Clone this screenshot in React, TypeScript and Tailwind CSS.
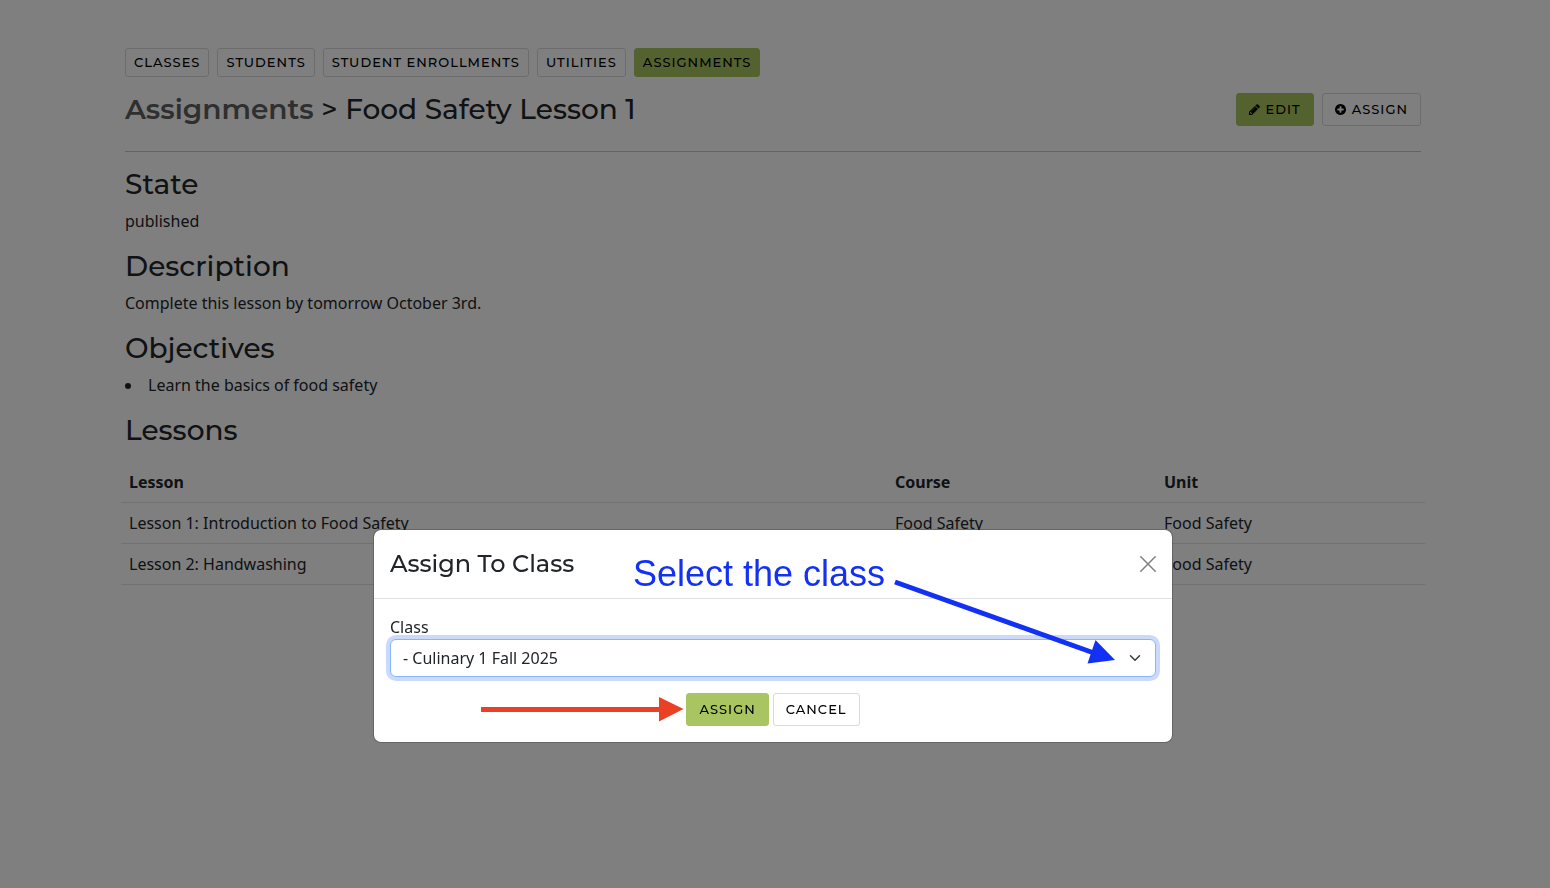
import React, { useState } from "react";

type lesson = {
  id: number;
  name: string;
  course: string;
  unit: string;
};

const tabs = ["Classes", "Students", "Student Enrollments", "Utilities", "Assignments"];

const lessons: lesson[] = [
  { id: 1, name: "Lesson 1: Introduction to Food Safety", course: "Food Safety", unit: "Food Safety" },
  { id: 2, name: "Lesson 2: Handwashing", course: "Food Safety", unit: "Food Safety" },
];

const button =
  "rounded-[3px] border font-['Montserrat','Inter',sans-serif] text-[13px] leading-[19px] font-medium uppercase tracking-[1px] text-black whitespace-nowrap";
const green = "border-[#a8c561] bg-[#a8c561]";
const white = "border-[#d9d9d9] bg-white";
const heading = "mb-2 font-['Montserrat','Inter',sans-serif] text-[28px] leading-[34px] font-medium";

function PencilIcon() {
  return (
    <svg viewBox="0 0 1536 1536" className="size-[11px]" fill="currentColor" aria-hidden="true">
      <path d="M363 1408l91-91-235-235-91 91v107h128v128h107zm523-928q0-22-22-22-10 0-17 7l-542 542q-7 7-7 17 0 22 22 22 10 0 17-7l542-542q7-7 7-17zm-54-192l416 416-832 832H0v-416zm683 96q0 53-37 90l-166 166-416-416 166-165q36-38 90-38 53 0 91 38l235 234q37 39 37 91z" />
    </svg>
  );
}

function PlusCircleIcon() {
  return (
    <svg viewBox="0 0 1536 1536" className="size-[11px]" fill="currentColor" aria-hidden="true">
      <path d="M1216 832v-128q0-26-19-45t-45-19h-256V384q0-26-19-45t-45-19H704q-26 0-45 19t-19 45v256H384q-26 0-45 19t-19 45v128q0 26 19 45t45 19h256v256q0 26 19 45t45 19h128q26 0 45-19t19-45V896h256q26 0 45-19t19-45zm320-64q0 209-103 385.5T1153.500 1433 768 1536t-385.500-103T103 1153.500 0 768t103-385.500T382.500 103 768 0t385.500 103T1433 382.500 1536 768z" />
    </svg>
  );
}

function AssignModal() {
  const [selected, setSelected] = useState("culinary-1");

  return (
    <div className="fixed inset-0 flex items-start justify-center bg-black/50 pt-[529px] pr-1">
      <div
        role="dialog"
        aria-labelledby="modal-title"
        className="relative w-full max-w-[800px] rounded-lg border border-black/20 bg-white bg-clip-padding"
      >
        <div className="flex items-center justify-between border-b border-[#dee2e6] p-4">
          <h2
            id="modal-title"
            className="font-['Montserrat','Inter',sans-serif] text-2xl leading-9 font-medium"
          >
            Assign To Class
          </h2>
          <button type="button" aria-label="Close" className="text-black/50">
            <svg viewBox="0 0 16 16" className="size-4" fill="none" stroke="currentColor" strokeWidth="1.5" strokeLinecap="round">
              <path d="M.8.8l14.4 14.4M15.2.8L.8 15.2" />
            </svg>
          </button>
        </div>

        <form className="p-4" onSubmit={(e) => e.preventDefault()}>
          <label htmlFor="class" className="block">
            Class
          </label>
          <div className="relative">
            <select
              id="class"
              value={selected}
              onChange={(e) => setSelected(e.target.value)}
              className="block h-[38px] w-full appearance-none rounded-md border border-[#86b7fe] bg-white px-3 outline-none ring-4 ring-[#cbd9fb]"
            >
              <option value="culinary-1">- Culinary 1 Fall 2025</option>
            </select>
            <svg
              viewBox="0 0 16 16"
              className="pointer-events-none absolute top-[13px] right-[15px] size-3"
              fill="none"
              stroke="#343a40"
              strokeWidth="2"
              strokeLinecap="round"
              strokeLinejoin="round"
            >
              <path d="m2 5 6 6 6-6" />
            </svg>
          </div>
          <div className="mt-4 flex justify-center gap-1">
            <button type="submit" className={`${button} ${green} px-3 py-[6px]`}>
              Assign
            </button>
            <button type="button" className={`${button} ${white} px-3 py-[6px]`}>
              Cancel
            </button>
          </div>
        </form>

        {/* Help notes drawn over the dialog */}
        <p className="pointer-events-none absolute top-6 left-[259px] font-['Liberation_Sans',Arial,sans-serif] text-4xl leading-10 whitespace-nowrap text-[#1330f5]">
          Select the class
        </p>
        <svg viewBox="0 0 798 212" className="pointer-events-none absolute inset-0 size-full" aria-hidden="true">
          <path d="M521 52L720 123" stroke="#1330f5" strokeWidth="5" />
          <path d="M741 130L721.500 110L713.500 133.500z" fill="#1330f5" />
          <path d="M107 179.500H287" stroke="#ea4025" strokeWidth="5" />
          <path d="M309.500 179L285 167V191.500z" fill="#ea4025" />
        </svg>
      </div>
    </div>
  );
}

export default function App() {
  return (
    <div className="min-h-screen bg-white pr-1 font-['Noto_Sans',sans-serif] text-base text-[#212529]">
      <main className="mx-auto max-w-[1296px] pt-12">
        <nav className="flex gap-2">
          {tabs.map((item) => (
            <a
              key={item}
              href="#"
              className={`${button} ${item === "Assignments" ? green : white} px-2 py-1`}
            >
              {item}
            </a>
          ))}
        </nav>

        <div className="mt-4 flex items-center justify-between">
          <h1 className="font-['Montserrat','Inter',sans-serif] text-[28px] leading-[33px] font-medium">
            <a href="#" className="font-semibold text-[#5e5e5e]">
              Assignments
            </a>{" "}
            &gt; Food Safety Lesson 1
          </h1>
          <div className="flex gap-2">
            <button type="button" className={`${button} ${green} flex items-center gap-[6px] px-3 py-[6px]`}>
              <PencilIcon />
              Edit
            </button>
            <button type="button" className={`${button} ${white} flex items-center gap-[6px] px-3 py-[6px]`}>
              <PlusCircleIcon />
              Assign
            </button>
          </div>
        </div>
        <hr className="mt-[25px] mb-[15px] border-[#c8c9ca]" />

        <h2 className={heading}>State</h2>
        <p className="mb-4">published</p>

        <h2 className={heading}>Description</h2>
        <p className="mb-4">Complete this lesson by tomorrow October 3rd.</p>

        <h2 className={heading}>Objectives</h2>
        <ul className="mb-4 list-inside list-disc">
          <li>Learn the basics of food safety</li>
        </ul>

        <h2 className={heading}>Lessons</h2>
        <div className="-mx-1 pt-[7px]">
          <table className="w-full table-fixed text-left">
            <thead>
              <tr className="border-b border-[#dee2e6]">
                <th className="p-2">Lesson</th>
                <th className="w-[269px] p-2">Course</th>
                <th className="w-[269px] p-2">Unit</th>
              </tr>
            </thead>
            <tbody>
              {lessons.map((item) => (
                <tr key={item.id} className="border-b border-[#dee2e6]">
                  <td className="p-2">{item.name}</td>
                  <td className="p-2">{item.course}</td>
                  <td className="p-2">{item.unit}</td>
                </tr>
              ))}
            </tbody>
          </table>
        </div>
      </main>

      <AssignModal />
    </div>
  );
}
